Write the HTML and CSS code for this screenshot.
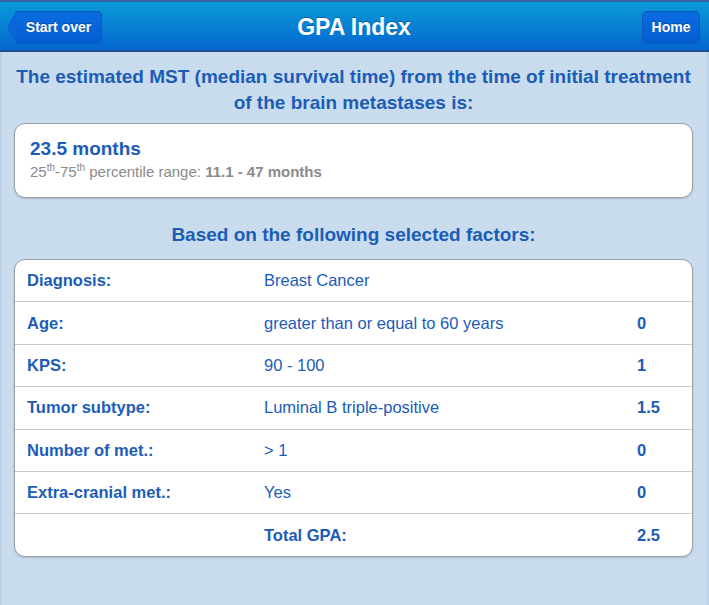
FILE: index.html
```html
<!DOCTYPE html>
<html>
<head>
<meta charset="utf-8">
<link rel="stylesheet" href="styles.css">
</head>
<body>
<div class="page">
  <header class="bar">
    <div class="left"><button class="btn back">Start over</button></div>
    <h1 class="title">GPA Index</h1>
    <div class="right"><button class="btn home">Home</button></div>
  </header>
  <main class="content">
    <p class="lead">The estimated MST (median survival time) from the time of initial treatment of the brain metastases is:</p>
    <div class="card result">
      <div class="months">23.5 months</div>
      <div class="range">25<sup>th</sup>-75<sup>th</sup> percentile range: <b>11.1 - 47 months</b></div>
    </div>
    <p class="lead sub">Based on the following selected factors:</p>
    <div class="card factors">
      <div class="row"><span class="lab">Diagnosis:</span><span class="val">Breast Cancer</span><span class="sc"></span></div>
      <div class="row"><span class="lab">Age:</span><span class="val">greater than or equal to 60 years</span><span class="sc">0</span></div>
      <div class="row"><span class="lab">KPS:</span><span class="val">90 - 100</span><span class="sc">1</span></div>
      <div class="row"><span class="lab">Tumor subtype:</span><span class="val">Luminal B triple-positive</span><span class="sc">1.5</span></div>
      <div class="row"><span class="lab">Number of met.:</span><span class="val">&gt; 1</span><span class="sc">0</span></div>
      <div class="row"><span class="lab">Extra-cranial met.:</span><span class="val">Yes</span><span class="sc">0</span></div>
      <div class="row total"><span class="lab"></span><span class="val">Total GPA:</span><span class="sc">2.5</span></div>
    </div>
  </main>
</div>
</body>
</html>
```
FILE: styles.css
```css
html, body {
  margin: 0;
  padding: 0;
}
body {
  font-family: "Liberation Sans", Arial, sans-serif;
  background: #c9dced;
  width: 709px;
  height: 605px;
  overflow: hidden;
}
.page {
  min-height: 605px;
  background: #c9dced;
  border-left: 2px solid #bcd1e5;
  border-right: 2px solid #bcd1e5;
  box-sizing: border-box;
}
.bar {
  height: 52px;
  box-sizing: border-box;
  border-top: 2px solid #3a62ac;
  border-bottom: 2px solid #1d4f8f;
  background: linear-gradient(#0a9bd8, #0566cf);
  display: grid;
  grid-template-columns: 1fr auto 1fr;
  align-items: center;
  padding: 0 9px 0 8px;
  margin: 0 -2px;
}
.right {
  display: flex;
  justify-content: flex-end;
}
.title {
  margin: 0;
  color: #fff;
  font-size: 23px;
  font-weight: bold;
  text-shadow: 0 -1px 0 rgba(0,0,0,0.3);
  position: relative;
  top: 1px;
}
.btn {
  display: block;
  font-family: "Liberation Sans", Arial, sans-serif;
  font-weight: bold;
  font-size: 14px;
  color: #fff;
  height: 33px;
  border: 1px solid #0b58be;
  border-radius: 5px;
  background: linear-gradient(#0a6be0, #045fd0);
  text-shadow: 0 -1px 0 rgba(0,0,0,0.3);
  padding: 0;
  position: relative;
  top: 1px;
}
.back {
  margin-left: 8px;
  width: 86px;
  border-left: none;
  border-radius: 0 5px 5px 0;
}
.back::before {
  content: "";
  position: absolute;
  left: -9px;
  top: -1px;
  width: 0;
  height: 0;
  border-top: 16.5px solid transparent;
  border-bottom: 16.5px solid transparent;
  border-right: 9px solid #0767d8;
}
.home {
  width: 58px;
}
.content {
  padding: 12px 14px 0 12px;
}
.lead {
  margin: 0;
  text-align: center;
  color: #1c5cb7;
  font-size: 19px;
  font-weight: bold;
  line-height: 26px;
}
.card {
  background: #fff;
  border: 1px solid #9a9fa6;
  border-radius: 11px;
  box-shadow: 0 1px 2px rgba(0,0,0,0.15);
}
.result {
  margin-top: 7px;
  height: 75px;
  box-sizing: border-box;
  padding: 13px 15px 0;
}
.months {
  color: #1c5cb7;
  font-weight: bold;
  font-size: 19px;
  line-height: 24px;
}
.range {
  color: #8a8a8a;
  font-size: 15px;
  line-height: 22px;
}
.range sup {
  font-size: 10px;
  line-height: 0;
}
.sub {
  margin-top: 24px;
}
.factors {
  margin-top: 11px;
  overflow: hidden;
}
.row {
  display: grid;
  grid-template-columns: 237px 1fr 55px;
  height: 41.4px;
  align-items: center;
  padding-left: 12px;
  border-top: 1px solid #c8c8c8;
  color: #1c5cb7;
  font-size: 16.5px;
}
.row:first-child {
  border-top: none;
}
.lab, .sc, .total .val {
  font-weight: bold;
}
```
